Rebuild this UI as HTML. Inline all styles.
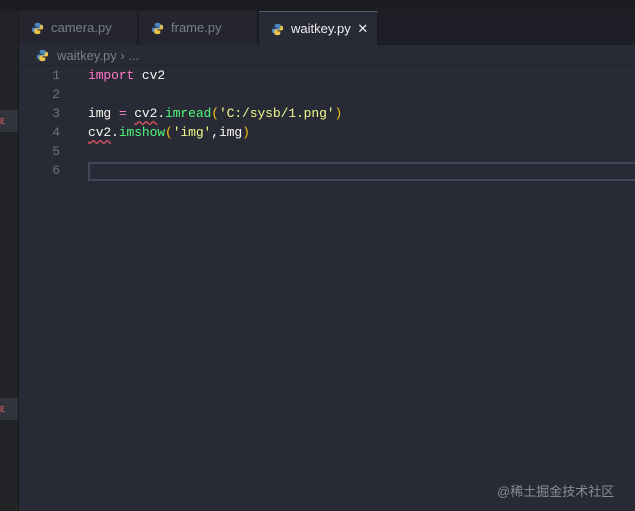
<!DOCTYPE html>
<html><head><meta charset="utf-8"><style>
*{margin:0;padding:0;box-sizing:border-box}
body{width:635px;height:511px;overflow:hidden;background:#282a36;position:relative;font-family:"Liberation Sans",sans-serif}
.top{position:absolute;left:0;top:0;width:635px;height:11px;background:#1c1d21}
.side{position:absolute;left:0;top:11px;width:19px;height:500px;background:#222326;border-right:1px solid #191a1e}
.sel{position:absolute;left:0;width:18px;height:22px;background:#32343b;color:#e05561;font-size:11px;line-height:22px}
.tabs{position:absolute;left:19px;top:11px;width:616px;height:34px;background:#1e1f26}
.tab{position:absolute;top:0;height:34px;width:119px;background:#24252e;border-right:1px solid #1a1b20;color:#7b7f8b;font-size:13px;line-height:34px;padding-left:32px}
.tab.a{background:#282a36;color:#f0f0f0;border-top:1px solid #555a6e}
.py{position:absolute;left:12px;top:11px}
.crumb{position:absolute;left:19px;top:45px;width:616px;height:21px;background:#282a36;color:#7b7f8b;font-size:13px;line-height:21px;padding-left:38px;border-bottom:1px solid #22232b}
.ln{position:absolute;left:30px;width:30px;text-align:right;color:#6d7180;font:13px "Liberation Mono",monospace}
.cd{position:absolute;left:88px;color:#f8f8f2;font:13px "Liberation Mono",monospace;white-space:pre;letter-spacing:-0.1px}
.k{color:#ff79c6}.f{color:#50fa7b}.s{color:#f1fa8c}.p{color:#f1c40f}
.sq{text-decoration:underline wavy #e05561;text-underline-offset:3px}
.cur{position:absolute;left:88px;top:162px;width:560px;height:19px;border:2px solid #44475a}
.wm{position:absolute;left:497px;top:481px;color:#8a8c96;font:13px "Liberation Sans","Noto Sans CJK SC",sans-serif}
</style></head><body>
<div class="top"></div>
<div class="side"><div class="sel" style="top:99px">ε</div><div class="sel" style="top:387px">ε</div></div>
<div class="tabs">
<div class="tab" style="left:0"><svg class="py" width="13" height="13" viewBox="0 0 14 14"><path d="M7 1C4 1 4 2 4 3v2h3v1H2.5C1 6 1 7 1 8.5S1.5 11 3 11h1V9c0-1 1-2 2-2h3c1 0 1.5-.5 1.5-1.5V3C10.5 1.5 9 1 7 1z" fill="#4b86c2"/><path d="M7 13c3 0 3-1 3-2V9H7V8h4.5C13 8 13 7 13 5.5S12.5 3 11 3h-1v2c0 1-1 2-2 2H5c-1 0-1.5.5-1.5 1.5V11c0 1.5 1.5 2 3.5 2z" fill="#e8c54a"/></svg>camera.py</div>
<div class="tab" style="left:120px"><svg class="py" width="13" height="13" viewBox="0 0 14 14"><path d="M7 1C4 1 4 2 4 3v2h3v1H2.5C1 6 1 7 1 8.5S1.5 11 3 11h1V9c0-1 1-2 2-2h3c1 0 1.5-.5 1.5-1.5V3C10.5 1.5 9 1 7 1z" fill="#4b86c2"/><path d="M7 13c3 0 3-1 3-2V9H7V8h4.5C13 8 13 7 13 5.5S12.5 3 11 3h-1v2c0 1-1 2-2 2H5c-1 0-1.5.5-1.5 1.5V11c0 1.5 1.5 2 3.5 2z" fill="#e8c54a"/></svg>frame.py</div>
<div class="tab a" style="left:240px"><svg class="py" width="13" height="13" viewBox="0 0 14 14"><path d="M7 1C4 1 4 2 4 3v2h3v1H2.5C1 6 1 7 1 8.5S1.5 11 3 11h1V9c0-1 1-2 2-2h3c1 0 1.5-.5 1.5-1.5V3C10.5 1.5 9 1 7 1z" fill="#4b86c2"/><path d="M7 13c3 0 3-1 3-2V9H7V8h4.5C13 8 13 7 13 5.5S12.5 3 11 3h-1v2c0 1-1 2-2 2H5c-1 0-1.5.5-1.5 1.5V11c0 1.5 1.5 2 3.5 2z" fill="#e8c54a"/></svg>waitkey.py <span style="margin-left:3px">✕</span></div>
</div>
<div class="crumb"><svg style="position:absolute;left:17px;top:4px" width="13" height="13" viewBox="0 0 14 14"><path d="M7 1C4 1 4 2 4 3v2h3v1H2.5C1 6 1 7 1 8.5S1.5 11 3 11h1V9c0-1 1-2 2-2h3c1 0 1.5-.5 1.5-1.5V3C10.5 1.5 9 1 7 1z" fill="#4b86c2"/><path d="M7 13c3 0 3-1 3-2V9H7V8h4.5C13 8 13 7 13 5.5S12.5 3 11 3h-1v2c0 1-1 2-2 2H5c-1 0-1.5.5-1.5 1.5V11c0 1.5 1.5 2 3.5 2z" fill="#e8c54a"/></svg>waitkey.py › ...</div>
<div class="cur"></div>
<div class="ln" style="top:68px">1</div><div class="ln" style="top:87px">2</div><div class="ln" style="top:106px">3</div><div class="ln" style="top:125px">4</div><div class="ln" style="top:144px">5</div><div class="ln" style="top:163px">6</div>
<div class="cd" style="top:68px"><span class="k">import</span> cv2</div>
<div class="cd" style="top:106px">img <span class="k">=</span> <span class="sq">cv2</span>.<span class="f">imread</span><span class="p">(</span><span class="s">'C:/sysb/1.png'</span><span class="p">)</span></div>
<div class="cd" style="top:125px"><span class="sq">cv2</span>.<span class="f">imshow</span><span class="p">(</span><span class="s">'img'</span>,img<span class="p">)</span></div>
<div class="wm">@稀土掘金技术社区</div>
</body></html>
